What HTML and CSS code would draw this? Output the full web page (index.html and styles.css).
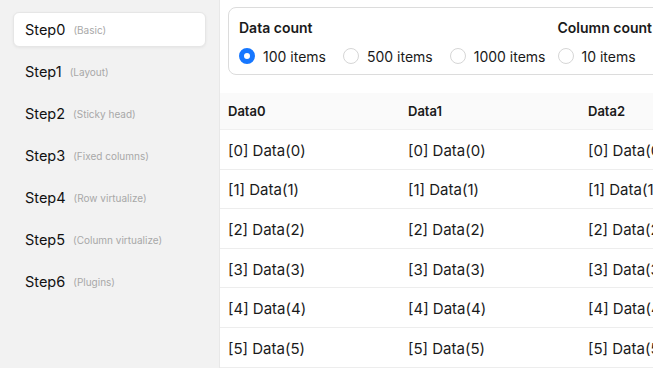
FILE: index.html
```html
<!DOCTYPE html>
<html lang="en">
<head>
  <meta charset="UTF-8">
  <link rel="stylesheet" href="styles.css">
  <title>Table steps</title>
</head>
<body>
  <div class="sidebar">
    <div class="step active"><span class="step-name">Step0</span><span class="step-desc">(Basic)</span></div>
    <div class="step"><span class="step-name">Step1</span><span class="step-desc">(Layout)</span></div>
    <div class="step"><span class="step-name">Step2</span><span class="step-desc">(Sticky head)</span></div>
    <div class="step"><span class="step-name">Step3</span><span class="step-desc">(Fixed columns)</span></div>
    <div class="step"><span class="step-name">Step4</span><span class="step-desc">(Row virtualize)</span></div>
    <div class="step"><span class="step-name">Step5</span><span class="step-desc">(Column virtualize)</span></div>
    <div class="step"><span class="step-name">Step6</span><span class="step-desc">(Plugins)</span></div>
  </div>
  <div class="main">
    <div class="panel">
      <div class="group">
        <div class="group-title">Data count</div>
        <div class="radios">
          <label class="radio checked"><span class="dot"></span>100 items</label>
          <label class="radio"><span class="dot"></span>500 items</label>
          <label class="radio"><span class="dot"></span>1000 items</label>
        </div>
      </div>
      <div class="group">
        <div class="group-title">Column count</div>
        <div class="radios">
          <label class="radio"><span class="dot"></span>10 items</label>
          <label class="radio checked"><span class="dot"></span>50 items</label>
          <label class="radio"><span class="dot"></span>100 items</label>
        </div>
      </div>
    </div>
    <table class="data-table">
      <colgroup>
        <col class="col"><col class="col"><col class="col"><col class="col">
      </colgroup>
      <thead>
        <tr><th>Data0</th><th>Data1</th><th>Data2</th><th>Data3</th></tr>
      </thead>
      <tbody>
        <tr><td>[0] Data(0)</td><td>[0] Data(0)</td><td>[0] Data(0)</td><td>[0] Data(0)</td></tr>
        <tr><td>[1] Data(1)</td><td>[1] Data(1)</td><td>[1] Data(1)</td><td>[1] Data(1)</td></tr>
        <tr><td>[2] Data(2)</td><td>[2] Data(2)</td><td>[2] Data(2)</td><td>[2] Data(2)</td></tr>
        <tr><td>[3] Data(3)</td><td>[3] Data(3)</td><td>[3] Data(3)</td><td>[3] Data(3)</td></tr>
        <tr><td>[4] Data(4)</td><td>[4] Data(4)</td><td>[4] Data(4)</td><td>[4] Data(4)</td></tr>
        <tr><td>[5] Data(5)</td><td>[5] Data(5)</td><td>[5] Data(5)</td><td>[5] Data(5)</td></tr>
      </tbody>
    </table>
  </div>
</body>
</html>
```

FILE: styles.css
```css
body {
  margin: 0;
  display: flex;
  height: 100vh;
  overflow: hidden;
  font-family: Inter, "Noto Sans", sans-serif;
  color: #1a1a1a;
  background: #fff;
}

.sidebar {
  width: 220px;
  flex-shrink: 0;
  background: #f2f2f2;
  border-right: 1px solid #e8e8e8;
  padding: 12px 13px 12px 13px;
  box-sizing: border-box;
  display: flex;
  flex-direction: column;
  gap: 7px;
}
.step {
  height: 35px;
  display: flex;
  align-items: center;
  padding-left: 11px;
  border-radius: 6px;
  border: 1px solid transparent;
  box-sizing: border-box;
}
.step.active {
  background: #fff;
  border-color: #e6e6e6;
  box-shadow: 0 1px 3px rgba(0, 0, 0, 0.06);
}
.step-name {
  font-size: 14.5px;
  color: #111;
}
.step-desc {
  font-size: 10px;
  color: #a8a8a8;
  margin-left: 8px;
}

.main {
  flex: 1;
  min-width: 0;
  overflow: hidden;
}

.panel {
  margin: 7px 0 0 8px;
  height: 68px;
  box-sizing: border-box;
  border: 1px solid #dcdcdc;
  border-radius: 8px;
  padding: 10px 10px 0 10px;
  display: flex;
  gap: 12px;
  width: max-content;
}
.group-title {
  font-size: 14px;
  font-weight: 600;
  height: 20px;
  line-height: 20px;
}
.radios {
  display: flex;
  margin-top: 6px;
}
.radio {
  display: flex;
  align-items: center;
  font-size: 14px;
  height: 24px;
  margin-right: 17px;
  white-space: nowrap;
}
.radio:last-child {
  margin-right: 0;
}
.dot {
  width: 16px;
  height: 16px;
  border-radius: 50%;
  border: 1px solid #d6d6d6;
  box-sizing: border-box;
  margin-right: 8px;
  background: #fff;
}
.radio.checked .dot {
  border: 5px solid #1677ff;
  background: #fff;
}

.data-table {
  margin-top: 18px;
  border-collapse: collapse;
  table-layout: fixed;
  width: 720px;
}
.col {
  width: 180px;
}
.data-table th,
.data-table td {
  text-align: left;
  padding: 0 8px;
  white-space: nowrap;
  overflow: hidden;
}
.data-table th {
  height: 36px;
  background: #fafafa;
  font-size: 13px;
  font-weight: 600;
  border-bottom: 1px solid #f0f0f0;
}
.data-table td {
  height: 36.6px;
  padding-top: 2px;
  font-size: 15px;
  border-bottom: 1px solid #ededed;
}
```
